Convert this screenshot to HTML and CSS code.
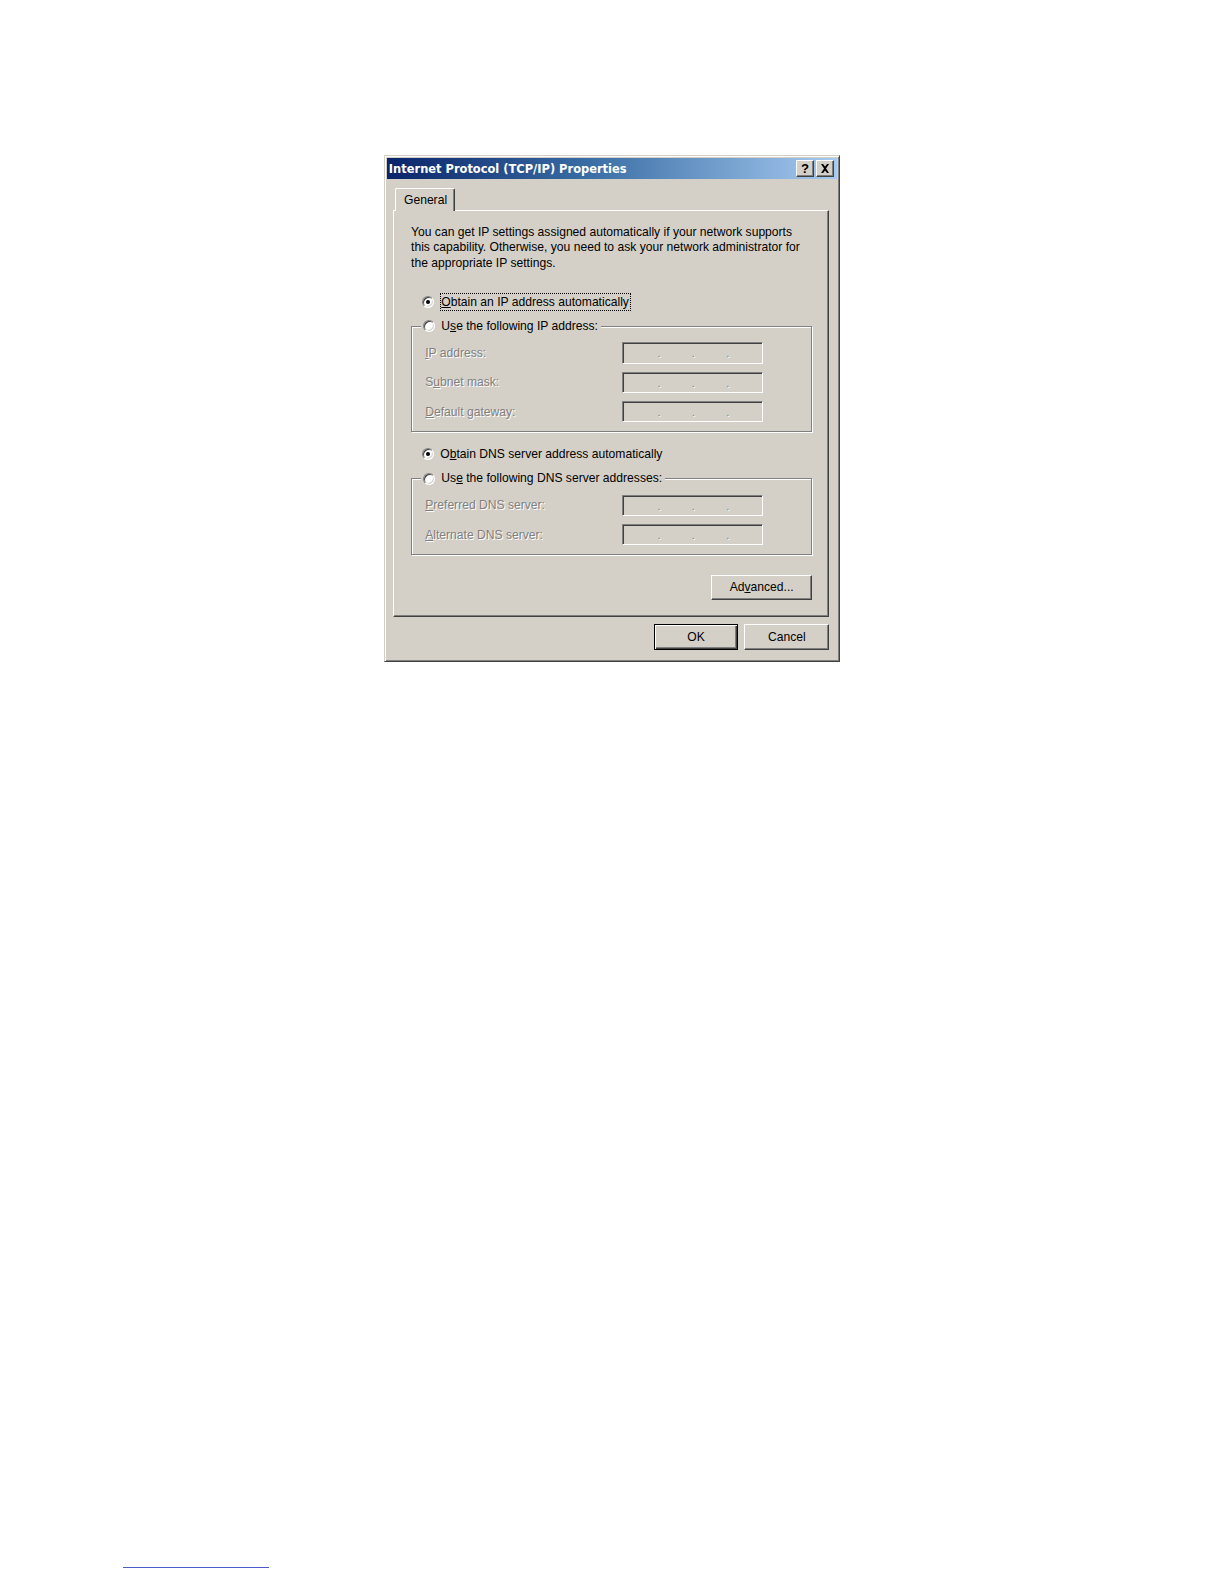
FILE: index.html
```html
<!DOCTYPE html>
<html lang="en">
<head>
<meta charset="utf-8">
<title>Internet Protocol (TCP/IP) Properties</title>
<link rel="stylesheet" href="styles.css">
</head>
<body>
<div class="page">
  <div class="window">
    <div class="titlebar">
      <span class="title">Internet Protocol (TCP/IP) Properties</span>
      <div class="caption-buttons">
        <span class="cap-btn help">?</span>
        <span class="cap-btn close">
          <svg width="10" height="9" viewBox="0 0 10 9"><path d="M1 0h2l2 2.5L7 0h2L6 4.5 9 9H7L5 6.5 3 9H1l3-4.5z" fill="#000"/></svg>
        </span>
      </div>
    </div>

    <div class="tabs">
      <div class="tab active">General</div>
    </div>
    <div class="panel">
      <p class="intro">You can get IP settings assigned automatically if your network supports this capability. Otherwise, you need to ask your network administrator for the appropriate IP settings.</p>

      <div class="radio-row first">
        <span class="radio checked"></span>
        <span class="label focus"><u>O</u>btain an IP address automatically</span>
      </div>

      <fieldset class="group">
        <legend class="legend">
          <span class="radio"></span>
          <span class="label">U<u>s</u>e the following IP address:</span>
        </legend>
        <div class="field-row">
          <span class="dlabel"><u>I</u>P address:</span>
          <span class="ipbox"><span class="oct o1"></span><span class="dot">.</span><span class="oct"></span><span class="dot">.</span><span class="oct"></span><span class="dot">.</span><span class="oct"></span></span>
        </div>
        <div class="field-row">
          <span class="dlabel">S<u>u</u>bnet mask:</span>
          <span class="ipbox"><span class="oct o1"></span><span class="dot">.</span><span class="oct"></span><span class="dot">.</span><span class="oct"></span><span class="dot">.</span><span class="oct"></span></span>
        </div>
        <div class="field-row">
          <span class="dlabel"><u>D</u>efault gateway:</span>
          <span class="ipbox"><span class="oct o1"></span><span class="dot">.</span><span class="oct"></span><span class="dot">.</span><span class="oct"></span><span class="dot">.</span><span class="oct"></span></span>
        </div>
      </fieldset>

      <div class="radio-row second">
        <span class="radio checked"></span>
        <span class="label">O<u>b</u>tain DNS server address automatically</span>
      </div>

      <fieldset class="group">
        <legend class="legend">
          <span class="radio"></span>
          <span class="label">Us<u>e</u> the following DNS server addresses:</span>
        </legend>
        <div class="field-row">
          <span class="dlabel"><u>P</u>referred DNS server:</span>
          <span class="ipbox"><span class="oct o1"></span><span class="dot">.</span><span class="oct"></span><span class="dot">.</span><span class="oct"></span><span class="dot">.</span><span class="oct"></span></span>
        </div>
        <div class="field-row">
          <span class="dlabel"><u>A</u>lternate DNS server:</span>
          <span class="ipbox"><span class="oct o1"></span><span class="dot">.</span><span class="oct"></span><span class="dot">.</span><span class="oct"></span><span class="dot">.</span><span class="oct"></span></span>
        </div>
      </fieldset>

      <div class="adv-row">
        <span class="btn adv">Ad<u>v</u>anced...</span>
      </div>
    </div>

    <div class="footer">
      <span class="btn default">OK</span>
      <span class="btn">Cancel</span>
    </div>
  </div>
  <div class="footnote-rule"></div>
</div>
</body>
</html>
```

FILE: styles.css
```css
html, body {
  margin: 0;
  padding: 0;
  background: #ffffff;
}

.page {
  padding-top: 153px;
  zoom: 1.0101;
}

.window {
  margin-left: 380px;
  width: 452px;
  height: 502px;
  box-sizing: border-box;
  background: #d4d0c8;
  border-top: 1px solid #d4d0c8;
  border-left: 1px solid #d4d0c8;
  border-right: 1px solid #404040;
  border-bottom: 1px solid #404040;
  box-shadow: inset 1px 1px 0 #ffffff, inset -1px -1px 0 #808080;
  padding: 2px;
  font-family: "Liberation Sans", Arial, sans-serif;
  font-size: 12px;
  color: #000;
  display: flex;
  flex-direction: column;
}

.titlebar {
  height: 21px;
  background: linear-gradient(to right, #0a246a 0%, #3a6ea5 45%, #a6caf0 100%);
  display: flex;
  align-items: center;
  justify-content: space-between;
  padding: 0 3px 0 2px;
}

.title {
  color: #fff;
  font-family: "DejaVu Sans Condensed", "DejaVu Sans", sans-serif;
  font-weight: bold;
  font-size: 12.6px;
  white-space: nowrap;
}

.caption-buttons {
  display: flex;
  gap: 2px;
}

.cap-btn {
  width: 18px;
  height: 17px;
  box-sizing: border-box;
  background: #d4d0c8;
  border-top: 1px solid #fff;
  border-left: 1px solid #fff;
  border-right: 1px solid #404040;
  border-bottom: 1px solid #404040;
  box-shadow: inset -1px -1px 0 #808080;
  display: flex;
  align-items: center;
  justify-content: center;
}

.cap-btn.help {
  font-family: "Liberation Sans", Arial, sans-serif;
  font-weight: bold;
  font-size: 13px;
  line-height: 1;
}

.tabs {
  display: flex;
  padding: 9px 0 0 8px;
  height: 31px;
  box-sizing: border-box;
  position: relative;
  z-index: 1;
}

.tab {
  height: 23px;
  box-sizing: border-box;
  padding: 0 7px 0 8px;
  display: flex;
  align-items: center;
  border-top: 1px solid #fff;
  border-left: 1px solid #fff;
  border-right: 1px solid #404040;
  box-shadow: inset -1px 0 0 #808080;
  border-radius: 2px 2px 0 0;
  background: #d4d0c8;
  margin-bottom: -2px;
}

.panel {
  margin: 0 8px 0 6px;
  height: 403px;
  box-sizing: border-box;
  border-top: 1px solid #fff;
  border-left: 1px solid #fff;
  border-right: 1px solid #404040;
  border-bottom: 1px solid #404040;
  box-shadow: inset -1px -1px 0 #808080;
  padding: 0 16px 0 17px;
  display: flex;
  flex-direction: column;
}

.intro {
  margin: 14px 0 0 0;
  line-height: 15px;
  width: 392px;
}

.radio-row {
  display: flex;
  align-items: center;
  height: 18px;
  padding-left: 11px;
}

.radio-row.first {
  margin-top: 22px;
}

.radio-row.second {
  margin-top: 13px;
}

.radio {
  width: 12px;
  height: 12px;
  flex: 0 0 12px;
  box-sizing: border-box;
  border-radius: 50%;
  background: #fff;
  border: 1px solid;
  border-color: #808080 #ffffff #ffffff #808080;
  box-shadow: inset 1px 1px 0 #404040, inset -1px -1px 0 #d4d0c8;
  display: flex;
  align-items: center;
  justify-content: center;
  margin-right: 6px;
}

.radio.checked::after {
  content: "";
  width: 4px;
  height: 4px;
  border-radius: 50%;
  background: #000;
}

.label {
  white-space: nowrap;
  line-height: 15px;
}

.label.focus {
  outline: 1px dotted #000;
  outline-offset: 0;
  padding: 1px 1px 0 0;
  margin-left: 1px;
}

.group {
  margin: 6px 0 0 0;
  padding: 7px 0 9px 13px;
  min-width: 0;
  border: 1px solid #808080;
  box-shadow: 1px 1px 0 #ffffff, inset 1px 1px 0 #ffffff;
  display: flex;
  flex-direction: column;
  gap: 8px;
}

.legend {
  display: flex;
  align-items: center;
  height: 18px;
  padding: 0 3px 0 2px;
  margin-left: -4px;
  background: #d4d0c8;
}

.field-row {
  display: flex;
  align-items: center;
  height: 21px;
}

.dlabel {
  width: 195px;
  color: #808080;
  text-shadow: 1px 1px 0 #fff;
  white-space: nowrap;
}

.ipbox {
  width: 139px;
  height: 21px;
  box-sizing: border-box;
  border: 1px solid;
  border-color: #808080 #ffffff #ffffff #808080;
  box-shadow: inset 1px 1px 0 #404040, inset -1px -1px 0 #d4d0c8;
  background: #d4d0c8;
  display: flex;
  align-items: flex-end;
  padding: 0 0 3px 1px;
}

.oct {
  width: 31px;
  height: 1px;
}

.oct.o1 {
  width: 33px;
}

.dot {
  width: 3px;
  text-align: center;
  color: #808080;
  text-shadow: 1px 1px 0 #fff;
  font-size: 11px;
  line-height: 12px;
}

.adv-row {
  display: flex;
  justify-content: flex-end;
  margin-top: 19px;
}

.btn {
  height: 26px;
  width: 84px;
  box-sizing: border-box;
  background: #d4d0c8;
  border-top: 1px solid #fff;
  border-left: 1px solid #fff;
  border-right: 1px solid #404040;
  border-bottom: 1px solid #404040;
  box-shadow: inset -1px -1px 0 #808080;
  display: flex;
  align-items: center;
  justify-content: center;
  white-space: nowrap;
}

.btn.adv {
  width: 100px;
  height: 25px;
}

.btn.default {
  border: 1px solid #000;
  box-shadow: inset 1px 1px 0 #fff, inset -1px -1px 0 #404040, inset -2px -2px 0 #808080;
}

.footer {
  display: flex;
  justify-content: flex-end;
  gap: 6px;
  padding: 7px 8px 0 0;
}

.footnote-rule {
  margin: 896px 0 0 122px;
  width: 144px;
  height: 1px;
  background: #4a5ac8;
}
```
